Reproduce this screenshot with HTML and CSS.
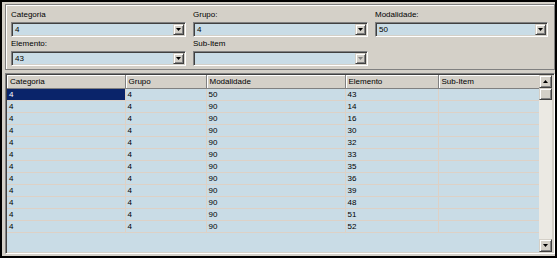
FILE: index.html
```html
<!DOCTYPE html>
<html>
<head>
<meta charset="utf-8">
<link rel="stylesheet" href="styles.css">
</head>
<body>
<div class="win">
  <div class="filters">
    <div class="field">
      <div class="lbl">Categoria</div>
      <div class="combo w1"><span class="val">4</span><span class="btn"><svg width="5" height="3" viewBox="0 0 5 3"><polygon points="0,0 5,0 2.5,3" fill="#000"/></svg></span></div>
    </div>
    <div class="field">
      <div class="lbl">Grupo:</div>
      <div class="combo w2"><span class="val">4</span><span class="btn"><svg width="5" height="3" viewBox="0 0 5 3"><polygon points="0,0 5,0 2.5,3" fill="#000"/></svg></span></div>
    </div>
    <div class="field">
      <div class="lbl">Modalidade:</div>
      <div class="combo w3"><span class="val">50</span><span class="btn"><svg width="5" height="3" viewBox="0 0 5 3"><polygon points="0,0 5,0 2.5,3" fill="#000"/></svg></span></div>
    </div>
    <div class="field">
      <div class="lbl">Elemento:</div>
      <div class="combo w1"><span class="val">43</span><span class="btn"><svg width="5" height="3" viewBox="0 0 5 3"><polygon points="0,0 5,0 2.5,3" fill="#000"/></svg></span></div>
    </div>
    <div class="field">
      <div class="lbl">Sub-Item</div>
      <div class="combo w2"><span class="val"></span><span class="btn"><svg width="5" height="3" viewBox="0 0 5 3"><polygon points="0,0 5,0 2.5,3" fill="#808080"/></svg></span></div>
    </div>
  </div>
  <div class="grid">
    <div class="tablearea">
      <table>
        <colgroup><col class="c1"><col class="c2"><col class="c3"><col class="c4"><col class="c5"></colgroup>
        <thead>
          <tr><th>Categoria</th><th>Grupo</th><th>Modalidade</th><th>Elemento</th><th>Sub-Item</th></tr>
        </thead>
        <tbody>
          <tr><td class="sel">4</td><td>4</td><td>50</td><td>43</td><td></td></tr>
          <tr><td>4</td><td>4</td><td>90</td><td>14</td><td></td></tr>
          <tr><td>4</td><td>4</td><td>90</td><td>16</td><td></td></tr>
          <tr><td>4</td><td>4</td><td>90</td><td>30</td><td></td></tr>
          <tr><td>4</td><td>4</td><td>90</td><td>32</td><td></td></tr>
          <tr><td>4</td><td>4</td><td>90</td><td>33</td><td></td></tr>
          <tr><td>4</td><td>4</td><td>90</td><td>35</td><td></td></tr>
          <tr><td>4</td><td>4</td><td>90</td><td>36</td><td></td></tr>
          <tr><td>4</td><td>4</td><td>90</td><td>39</td><td></td></tr>
          <tr><td>4</td><td>4</td><td>90</td><td>48</td><td></td></tr>
          <tr><td>4</td><td>4</td><td>90</td><td>51</td><td></td></tr>
          <tr><td>4</td><td>4</td><td>90</td><td>52</td><td></td></tr>
        </tbody>
      </table>
    </div>
    <div class="vscroll">
      <div class="sbtn"><svg width="5" height="3" viewBox="0 0 5 3"><polygon points="2.5,0 5,3 0,3" fill="#000"/></svg></div>
      <div class="thumb"></div>
      <div class="track"></div>
      <div class="sbtn"><svg width="5" height="3" viewBox="0 0 5 3"><polygon points="0,0 5,0 2.5,3" fill="#000"/></svg></div>
    </div>
  </div>
</div>
</body>
</html>
```

FILE: styles.css
```css
html, body {
  margin: 0;
  padding: 0;
  background: #fff;
}
body {
  font-family: "Liberation Sans", Arial, sans-serif;
  font-size: 8px;
  color: #000;
}
.win {
  width: 557px;
  height: 258px;
  box-sizing: border-box;
  border: 2px solid #000;
  background: #d4d0c8;
  padding: 2px 0 2px 3px;
  display: flex;
  flex-direction: column;
  gap: 2px;
}
.filters {
  border: 1px solid #808080;
  box-shadow: inset 1px 1px 0 #fff;
  padding: 4px 5px 3px 5px;
  display: grid;
  grid-template-columns: 175px 175px 173px;
  column-gap: 7px;
  row-gap: 1px;
}
.field {
  display: flex;
  flex-direction: column;
}
.lbl {
  height: 12px;
  line-height: 12px;
  margin-bottom: 1px;
  white-space: nowrap;
}
.combo {
  height: 15px;
  box-sizing: border-box;
  border-top: 1px solid #808080;
  border-left: 1px solid #808080;
  border-right: 1px solid #fff;
  border-bottom: 1px solid #fff;
  box-shadow: inset 1px 1px 0 #404040, inset -1px -1px 0 #d4d0c8;
  background: #c9dce6;
  padding: 1px;
  display: flex;
  align-items: stretch;
}
.val {
  flex: 1;
  line-height: 11px;
  padding-left: 2px;
}
.btn {
  width: 11px;
  box-sizing: border-box;
  background: #d4d0c8;
  border-top: 1px solid #d4d0c8;
  border-left: 1px solid #d4d0c8;
  border-right: 1px solid #404040;
  border-bottom: 1px solid #404040;
  box-shadow: inset 1px 1px 0 #fff, inset -1px -1px 0 #808080;
  display: flex;
  align-items: center;
  justify-content: center;
}
.grid {
  flex: 1;
  box-sizing: border-box;
  border-top: 1px solid #808080;
  border-left: 1px solid #808080;
  border-right: 1px solid #fff;
  border-bottom: 1px solid #fff;
  box-shadow: inset 1px 1px 0 #404040, inset -1px -1px 0 #d4d0c8;
  padding: 1px;
  display: flex;
  margin-top: 1px;
}
.tablearea {
  width: 532px;
  background: #c9dce6;
}
table {
  border-collapse: collapse;
  table-layout: fixed;
  width: 532px;
}
.c1 { width: 118px; }
.c2 { width: 81px; }
.c3 { width: 139px; }
.c4 { width: 93px; }
.c5 { width: 101px; }
th {
  height: 13px;
  box-sizing: border-box;
  padding: 0 0 0 3px;
  background: #d4d0c8;
  font-weight: normal;
  text-align: left;
  line-height: 11px;
  border-right: 1px solid #808080;
  border-bottom: 1px solid #808080;
  box-shadow: inset 1px 1px 0 #fff;
  white-space: nowrap;
  overflow: hidden;
}
td {
  height: 12px;
  box-sizing: border-box;
  padding: 0 0 0 2px;
  line-height: 11px;
  border-right: 1px solid #ddd1c6;
  border-bottom: 1px solid #ddd1c6;
}
td.sel {
  background: #0a246a;
  color: #fff;
}
.vscroll {
  width: 13px;
  display: flex;
  flex-direction: column;
  background: #ebe9e3;
}
.sbtn, .thumb {
  height: 13px;
  box-sizing: border-box;
  background: #d4d0c8;
  border-top: 1px solid #d4d0c8;
  border-left: 1px solid #d4d0c8;
  border-right: 1px solid #404040;
  border-bottom: 1px solid #404040;
  box-shadow: inset 1px 1px 0 #fff, inset -1px -1px 0 #808080;
  display: flex;
  align-items: center;
  justify-content: center;
}
.thumb {
  height: 12px;
}
.track {
  flex: 1;
}
```
